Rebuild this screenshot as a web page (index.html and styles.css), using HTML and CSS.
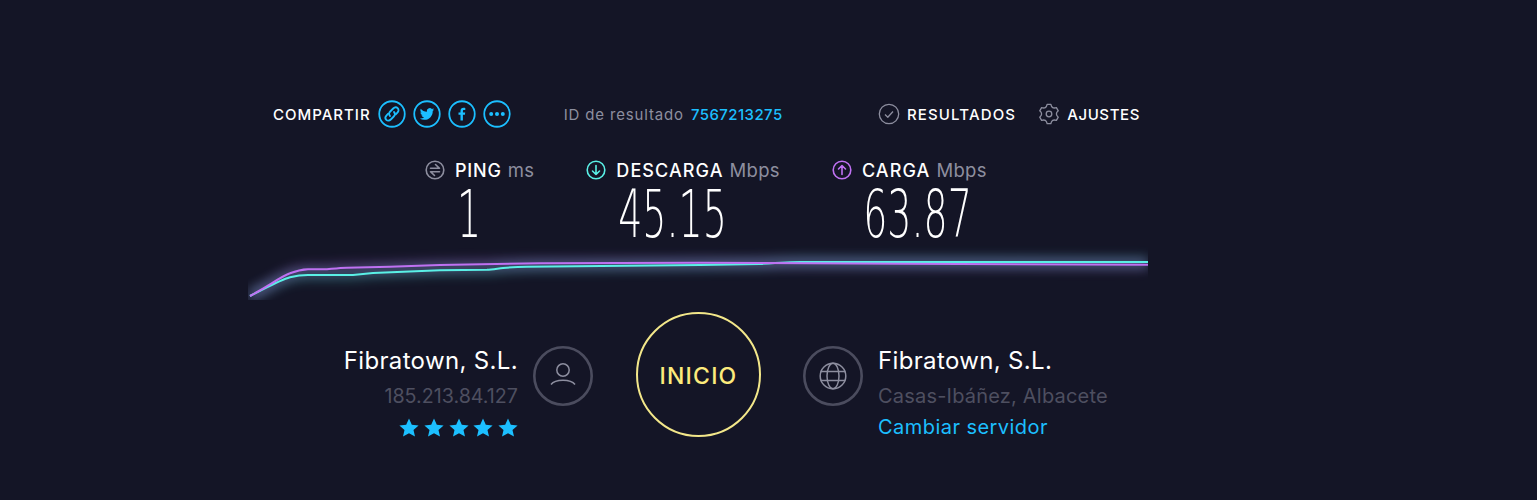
FILE: index.html
```html
<!DOCTYPE html>
<html lang="es">

<head>
    <meta charset="UTF-8">
    <meta name="viewport" content="width=device-width, initial-scale=1.0">
    <title>Speedtest</title>
    <link rel="stylesheet" href="styles.css">
</head>

<body>
    <div class="speedtest">
        <div class="top-row">
            <div class="share">
                <span class="share-label">COMPARTIR</span>
                <svg class="share-icon" viewBox="0 0 28 28">
                    <circle cx="14" cy="14" r="12.75" />
                    <path d="M12 16c-1.300-1.300-1.100-3.200.2-4.500l3-3c1.400-1.400 3.300-1.500 4.500-.3s1.100 3.100-.3 4.500l-1.600 1.600" />
                    <path d="M16 12c1.300 1.300 1.100 3.200-.2 4.500l-3 3c-1.400 1.400-3.300 1.500-4.500.3s-1.100-3.100.3-4.500l1.600-1.600" />
                </svg>
                <svg class="share-icon" viewBox="0 0 28 28">
                    <circle cx="14" cy="14" r="12.75" />
                    <path class="solid" transform="translate(6.8 6.8) scale(.6)" d="M23.953 4.57a10 10 0 01-2.825.775 4.958 4.958 0 002.163-2.723c-.951.555-2.005.959-3.127 1.184a4.92 4.92 0 00-8.384 4.482C7.69 8.095 4.067 6.13 1.64 3.162a4.822 4.822 0 00-.666 2.475c0 1.71.87 3.213 2.188 4.096a4.904 4.904 0 01-2.228-.616v.06a4.923 4.923 0 003.946 4.827 4.996 4.996 0 01-2.212.085 4.936 4.936 0 004.604 3.417 9.867 9.867 0 01-6.102 2.105c-.39 0-.779-.023-1.17-.067a13.995 13.995 0 007.557 2.209c9.053 0 13.998-7.496 13.998-13.985 0-.21 0-.42-.015-.63A9.935 9.935 0 0024 4.59z" />
                </svg>
                <svg class="share-icon" viewBox="0 0 28 28">
                    <circle cx="14" cy="14" r="12.75" />
                    <path class="solid" d="M14.9 20.5v-5.8h2l.3-2.3h-2.3v-1.4c0-.7.2-1.1 1.1-1.1h1.3v-2c-.3 0-1-.1-1.8-.1-1.8 0-3 1.100-3 3.100v1.500h-2v2.300h2v5.800z" />
                </svg>
                <svg class="share-icon" viewBox="0 0 28 28">
                    <circle cx="14" cy="14" r="12.75" />
                    <circle class="solid" cx="8.200" cy="14" r="2" />
                    <circle class="solid" cx="14" cy="14" r="2" />
                    <circle class="solid" cx="19.800" cy="14" r="2" />
                </svg>
            </div>
            <div class="result-id">ID de resultado <a class="result-link">7567213275</a></div>
            <div class="top-links">
                <span class="top-link">
                    <svg class="top-icon" viewBox="0 0 22 22">
                        <circle cx="11" cy="11" r="9.700" />
                        <path d="M7 11.500l2.800 2.700L15 8.500" />
                    </svg>
                    <span class="top-resultados">RESULTADOS</span>
                </span>
                <span class="top-link">
                    <svg class="top-icon" viewBox="0 0 22 22">
                        <path d="M9.130 1.380H12.870Q13.750 6.240 18.400 4.570L20.270 7.810Q16.500 11 20.270 14.190L18.400 17.430Q13.750 15.760 12.870 20.620H9.130Q8.250 15.760 3.600 17.430L1.730 14.190Q5.500 11 1.730 7.810L3.600 4.570Q8.250 6.240 9.130 1.380Z" />
                        <circle cx="11" cy="11" r="2.800" />
                    </svg>
                    <span class="top-ajustes">AJUSTES</span>
                </span>
            </div>
        </div>

        <div class="stats">
            <div class="stat stat-ping">
                <div class="stat-head">
                    <svg class="stat-icon icon-ping" viewBox="0 0 20 20">
                        <circle cx="10" cy="10" r="8.800" />
                        <path d="M5.500 8.300h9l-4-3.800M14.500 11.700h-9l4 3.800" />
                    </svg>
                    <span class="stat-name">PING</span> <span class="stat-unit">ms</span>
                </div>
                <div class="stat-value"><span>1</span></div>
            </div>
            <div class="stat stat-down">
                <div class="stat-head">
                    <svg class="stat-icon icon-down" viewBox="0 0 20 20">
                        <circle cx="10" cy="10" r="8.800" />
                        <path d="M10 5.500v9M6.500 11l3.500 3.500 3.500-3.500" />
                    </svg>
                    <span class="stat-name">DESCARGA</span> <span class="stat-unit">Mbps</span>
                </div>
                <div class="stat-value"><span>45.15</span></div>
            </div>
            <div class="stat stat-up">
                <div class="stat-head">
                    <svg class="stat-icon icon-up" viewBox="0 0 20 20">
                        <circle cx="10" cy="10" r="8.800" />
                        <path d="M10 14.500v-9M6.500 9L10 5.500 13.500 9" />
                    </svg>
                    <span class="stat-name">CARGA</span> <span class="stat-unit">Mbps</span>
                </div>
                <div class="stat-value"><span>63.87</span></div>
            </div>
        </div>

        <svg class="graph" viewBox="248 245 900 55">
            <defs>
                <filter id="glow" x="-5%" y="-100%" width="110%" height="300%">
                    <feGaussianBlur stdDeviation="6" />
                </filter>
            </defs>
            <path class="glow glow-down" d="M250 296C268 287 280 280 290 277.300C296 275.800 302 275 308 275H353L373 273L440 270.300L487 269.700C492 269.500 498 268.500 503 268C512 267.200 520 266.800 527 266.700L700 265L760 264C775 263 790 262 800 262H1148" />
            <path class="glow glow-up" d="M250 296C270 285 282 276 290 273.300C297 270.500 302 269.500 308 269.300C315 269.300 322 269.300 327 269.300C335 268.500 340 267.800 347 267.700L390 266.700L440 265L540 263.300L700 262.700L900 263.700L1148 264.700" />
            <path class="line line-down" d="M250 296C268 287 280 280 290 277.300C296 275.800 302 275 308 275H353L373 273L440 270.300L487 269.700C492 269.500 498 268.500 503 268C512 267.200 520 266.800 527 266.700L700 265L760 264C775 263 790 262 800 262H1148" />
            <path class="line line-up" d="M250 296C270 285 282 276 290 273.300C297 270.500 302 269.500 308 269.300C315 269.300 322 269.300 327 269.300C335 268.500 340 267.800 347 267.700L390 266.700L440 265L540 263.300L700 262.700L900 263.700L1148 264.700" />
        </svg>

        <div class="bottom-row">
            <div class="isp">
                <div class="isp-text">
                    <div class="host-name">Fibratown, S.L.</div>
                    <div class="host-detail">185.213.84.127</div>
                    <div class="stars">
                        <svg class="star" viewBox="0 0 20 20"><path d="M10 .4l2.800 6.300 6.800.7-5.100 4.500 1.500 6.700L10 15.200l-6 3.400 1.500-6.700L.4 7.400l6.800-.7z" /></svg>
                        <svg class="star" viewBox="0 0 20 20"><path d="M10 .4l2.800 6.300 6.800.7-5.100 4.500 1.500 6.700L10 15.200l-6 3.400 1.500-6.700L.4 7.400l6.800-.7z" /></svg>
                        <svg class="star" viewBox="0 0 20 20"><path d="M10 .4l2.800 6.300 6.800.7-5.100 4.500 1.500 6.700L10 15.200l-6 3.400 1.500-6.700L.4 7.400l6.800-.7z" /></svg>
                        <svg class="star" viewBox="0 0 20 20"><path d="M10 .4l2.800 6.300 6.800.7-5.100 4.500 1.500 6.700L10 15.200l-6 3.400 1.500-6.700L.4 7.400l6.800-.7z" /></svg>
                        <svg class="star" viewBox="0 0 20 20"><path d="M10 .4l2.800 6.300 6.800.7-5.100 4.500 1.500 6.700L10 15.200l-6 3.400 1.500-6.700L.4 7.400l6.800-.7z" /></svg>
                    </div>
                </div>
                <svg class="round-icon" viewBox="0 0 60 60">
                    <circle class="round-ring" cx="30" cy="30" r="28.700" />
                    <circle cx="30" cy="24" r="6.200" />
                    <path d="M18 38.500c2.500-3.300 7-4.200 12-4.200s9.500.9 12 4.200" />
                </svg>
            </div>
            <div class="start-btn">INICIO</div>
            <div class="server">
                <svg class="round-icon" viewBox="0 0 60 60">
                    <circle class="round-ring" cx="30" cy="30" r="28.700" />
                    <circle cx="30" cy="30" r="12.800" />
                    <ellipse cx="30" cy="30" rx="6" ry="12.800" />
                    <path d="M17.500 25.500h25M17.500 34.500h25" />
                </svg>
                <div class="server-text">
                    <div class="host-name">Fibratown, S.L.</div>
                    <div class="host-detail">Casas-Ibáñez, Albacete</div>
                    <a class="change-server">Cambiar servidor</a>
                </div>
            </div>
        </div>
    </div>
</body>

</html>
```

FILE: styles.css
```css
body {
    margin: 0;
    background-color: #141526;
    color: #fff;
    font-family: "Inter", "Liberation Sans", sans-serif;
    overflow: hidden;
}

.speedtest {
    width: 900px;
    margin-left: 248px;
    padding-top: 100px;
}

svg {
    display: block;
    flex: none;
    fill: none;
}

.top-row {
    display: flex;
    align-items: center;
    height: 28px;
    padding: 0 8px 0 25px;
}

.share {
    display: flex;
    align-items: center;
    gap: 7px;
}

.share-label {
    font-size: 15px;
    font-weight: 500;
    letter-spacing: 1px;
}

.share-icon {
    width: 28px;
    height: 28px;
    stroke: #1cbfff;
    stroke-width: 1.8;
    stroke-linecap: round;
}

.share-icon .solid {
    fill: #1cbfff;
    stroke: none;
}

.result-id {
    margin-left: 53px;
    font-size: 15px;
    letter-spacing: 0.85px;
    color: #8d8e9f;
}

.result-link {
    margin-left: 2px;
    color: #1cbfff;
    font-weight: 500;
    letter-spacing: 0.4px;
}

.top-links {
    display: flex;
    gap: 22px;
    margin-left: auto;
}

.top-link {
    display: flex;
    align-items: center;
    gap: 7px;
    font-size: 15px;
    font-weight: 500;
}

.top-resultados {
    letter-spacing: 1.15px;
}

.top-ajustes {
    letter-spacing: 0.6px;
}

.top-icon {
    width: 22px;
    height: 22px;
    stroke: #8d8e9f;
    stroke-width: 1.300;
    stroke-linejoin: round;
}

.stats {
    display: flex;
    gap: 52px;
    padding-left: 177px;
    margin-top: 28px;
}

.stat-head {
    display: flex;
    align-items: center;
    gap: 6px;
    height: 28px;
    font-size: 18px;
    font-weight: 500;
    letter-spacing: 1.100px;
    white-space: nowrap;
}

.stat-ping .stat-name {
    letter-spacing: 0.800px;
}

.stat-icon {
    width: 20px;
    height: 20px;
    margin-right: 4px;
    stroke-width: 1.600;
    stroke-linecap: round;
    stroke-linejoin: round;
}

.icon-ping {
    stroke: #8d8e9f;
}

.icon-down {
    stroke: #5af0e6;
}

.icon-up {
    stroke: #bf71f2;
}

.stat-unit {
    color: #8d8e9f;
    font-size: 18.500px;
    font-weight: 400;
    letter-spacing: 0.3px;
}

/* digits are wider than the label, keep them out of the column width */
.stat-value {
    display: flex;
    justify-content: center;
    box-sizing: border-box;
    width: 0;
    min-width: 100%;
    height: 66px;
    padding-right: 22px;
    font-family: "DejaVu Sans", sans-serif;
    font-size: 66px;
    font-weight: 200;
    line-height: 62px;
}

.stat-up .stat-value {
    padding-right: 0;
    padding-left: 17px;
}

.stat-value span {
    display: block;
    transform: scaleX(0.575);
}

.graph {
    width: 900px;
    height: 55px;
    margin-top: -5px;
}

.line {
    fill: none;
    stroke-width: 2;
}

.line-up {
    stroke: #bf71f2;
}

.line-down {
    stroke: #5af0e6;
}

.glow {
    fill: none;
    stroke-width: 8;
    filter: url(#glow);
    opacity: 0.35;
}

.glow-up {
    stroke: #bf71f2;
}

.glow-down {
    stroke: #5af0e6;
}

.bottom-row {
    display: grid;
    grid-template-columns: 345px 125px 1fr;
    column-gap: 43px;
    margin-top: 12px;
}

.isp,
.server {
    display: flex;
    align-items: flex-start;
    gap: 15px;
    padding-top: 34px;
}

.isp {
    justify-content: flex-end;
    text-align: right;
}

.server {
    margin-left: -1px;
}

.round-icon {
    width: 60px;
    height: 60px;
    stroke: #8d8e9f;
    stroke-width: 1.500;
}

.round-ring {
    stroke: #4b4c5e;
    stroke-width: 2.600;
}

.host-name {
    font-size: 24px;
    line-height: 30px;
    letter-spacing: 0.35px;
}

.host-detail {
    margin-top: 8px;
    font-size: 20px;
    line-height: 24px;
    letter-spacing: 0.2px;
    color: #4e4f60;
}

.isp .host-detail {
    font-size: 19.700px;
    letter-spacing: 0;
}

.stars {
    display: flex;
    justify-content: flex-end;
    gap: 4.700px;
    margin-top: 10px;
}

.star {
    width: 20px;
    height: 20px;
    fill: #1cbfff;
}

.change-server {
    display: block;
    margin-top: 7px;
    font-size: 20px;
    line-height: 24px;
    letter-spacing: 0.45px;
    color: #1cbfff;
}

.start-btn {
    display: flex;
    align-items: center;
    justify-content: center;
    box-sizing: border-box;
    width: 125px;
    height: 125px;
    padding-top: 2px;
    border: 2px solid #f3e78a;
    border-radius: 50%;
    color: #fdeb7c;
    font-size: 23px;
    font-weight: 500;
    letter-spacing: 1.200px;
}
```
